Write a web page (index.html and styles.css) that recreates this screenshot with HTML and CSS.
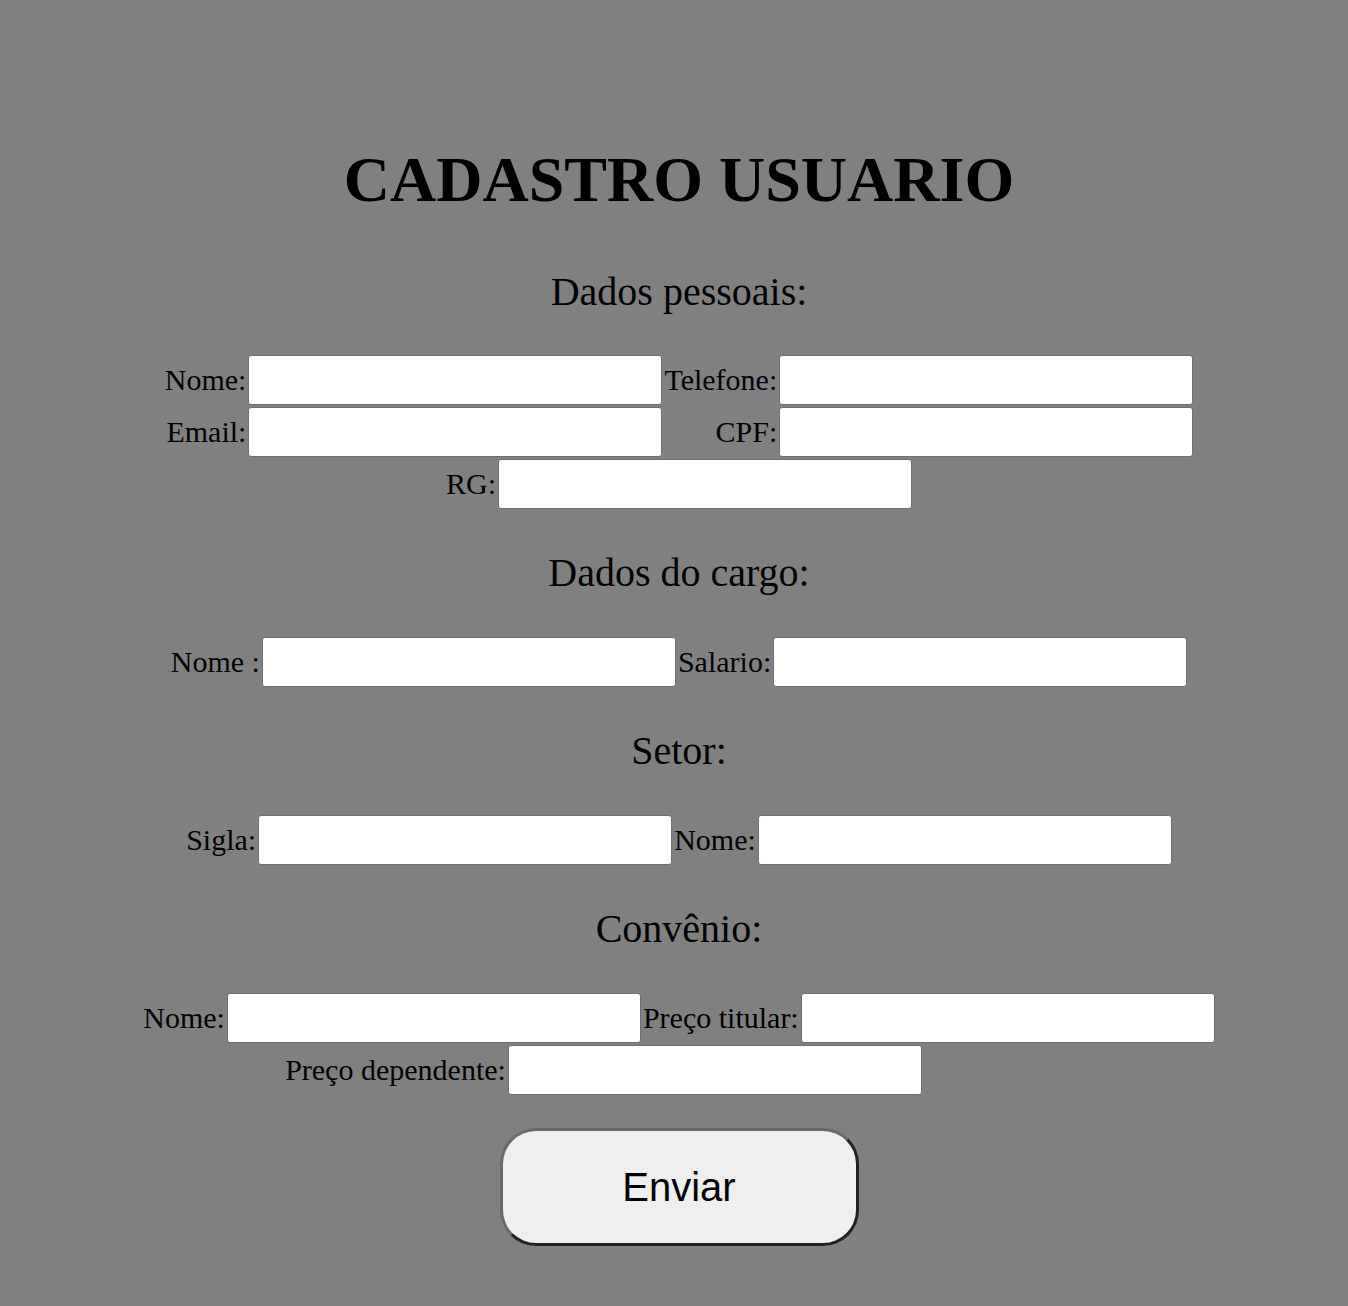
FILE: index.html
```html
<!DOCTYPE html>
<html lang="pt-BR">
<head>
<meta charset="utf-8">
<title>Cadastro Usuario</title>
<link rel="stylesheet" href="styles.css">
</head>
<body>
<main class="page">
  <h1 class="title">CADASTRO USUARIO</h1>
  <form class="form" onsubmit="return false">
    <h2 class="section-title">Dados pessoais:</h2>
    <div class="grid">
      <label class="lbl" for="nome">Nome:</label><input class="field" id="nome" type="text">
      <label class="lbl" for="tel">Telefone:</label><input class="field" id="tel" type="text">
      <label class="lbl" for="email">Email:</label><input class="field" id="email" type="text">
      <label class="lbl" for="cpf">CPF:</label><input class="field" id="cpf" type="text">
      <div class="row span-all"><label class="lbl" for="rg">RG:</label><input class="field" id="rg" type="text"></div>
    </div>

    <h2 class="section-title">Dados do cargo:</h2>
    <div class="row">
      <label class="lbl" for="cnome">Nome :</label><input class="field" id="cnome" type="text">
      <label class="lbl" for="sal">Salario:</label><input class="field" id="sal" type="text">
    </div>

    <h2 class="section-title">Setor:</h2>
    <div class="row">
      <label class="lbl" for="sigla">Sigla:</label><input class="field" id="sigla" type="text">
      <label class="lbl" for="snome">Nome:</label><input class="field" id="snome" type="text">
    </div>

    <h2 class="section-title">Convênio:</h2>
    <div class="rows">
      <div class="row">
        <label class="lbl" for="vnome">Nome:</label><input class="field" id="vnome" type="text">
        <label class="lbl" for="ptit">Preço titular:</label><input class="field" id="ptit" type="text">
      </div>
      <div class="row row-shift">
        <label class="lbl" for="pdep">Preço dependente:</label><input class="field" id="pdep" type="text">
      </div>
    </div>

    <div class="actions">
      <button class="btn" type="submit">Enviar</button>
    </div>
  </form>
</main>
</body>
</html>
```

FILE: styles.css
```css
html, body {
  margin: 0;
  padding: 0;
  background: #808080;
}

body {
  font-family: "Liberation Serif", "Times New Roman", serif;
  color: #000;
}

.page {
  padding: 143px 0 40px 10px;
  text-align: center;
}

.title {
  margin: 0 0 52px;
  font-size: 64px;
  line-height: 74px;
  font-weight: bold;
}

.form {
  margin: 0;
}

.section-title {
  margin: 41px 0 41px;
  font-size: 40px;
  line-height: 46px;
  font-weight: normal;
}

.form > .section-title:first-child {
  margin-top: 0;
  margin-bottom: 40px;
}

.grid {
  display: grid;
  grid-template-columns: auto 414px auto 414px;
  justify-content: center;
  column-gap: 2px;
  row-gap: 2px;
  align-items: center;
}

.grid .lbl {
  text-align: right;
}

.span-all {
  grid-column: 1 / -1;
}

.rows {
  display: flex;
  flex-direction: column;
  gap: 2px;
}

.row {
  display: flex;
  justify-content: center;
  align-items: center;
  gap: 2px;
}

.row-shift {
  padding-right: 151px;
}

.lbl {
  font-size: 30px;
  line-height: 34px;
  white-space: nowrap;
}

.field {
  box-sizing: border-box;
  width: 414px;
  height: 50px;
  margin: 0;
  padding: 0 6px;
  border: 1px solid #6f6f6f;
  border-radius: 3px;
  background: #fff;
  font-size: 20px;
}

.actions {
  display: flex;
  justify-content: center;
  margin-top: 33px;
}

.btn {
  box-sizing: border-box;
  width: 359px;
  height: 118px;
  margin: 0;
  padding: 0;
  border: 3px solid;
  border-color: #6a6a6a #222 #222 #6a6a6a;
  border-radius: 36px;
  background: #efefef;
  font-family: "Liberation Sans", Arial, sans-serif;
  font-size: 40px;
  color: #000;
  cursor: pointer;
}
```
